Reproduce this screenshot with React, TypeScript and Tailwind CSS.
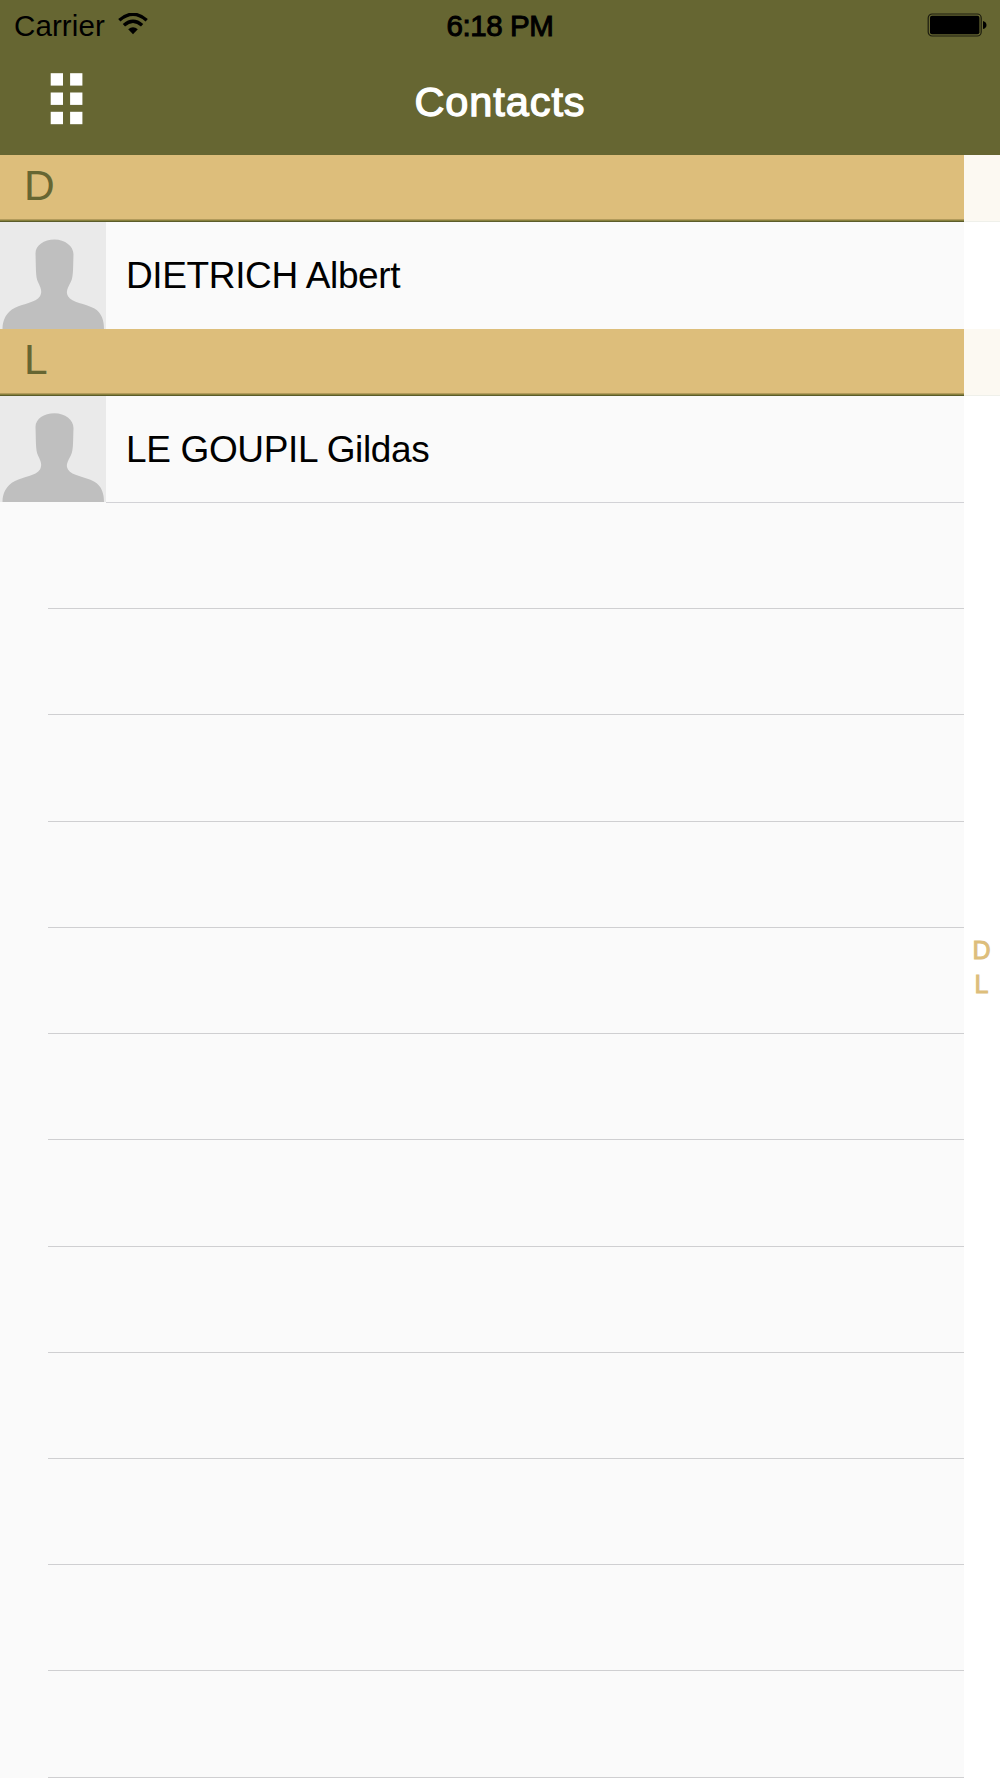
import React from "react";

function Avatar() {
  return (
    <svg viewBox="0 0 106 106" preserveAspectRatio="none" className="h-full w-[106px] shrink-0 bg-[#eaeaea]">
      <path
        d="M2.500 106C2.500 97.500 6 89.500 15 85C24 80.500 35.500 80 40 73.500C42.500 68.500 40.800 65.500 38 59.500C35.500 54.500 36 44 35.500 31C35.500 23 44 17.300 54.500 17.300C65 17.300 73.500 24 73.500 32C73 45 73.500 54 71 59C67.500 66 65.500 69 68 73.500C72 80 85 80.500 94 85.500C102 90 104 98 104 106Z"
        fill="#bfbfbf"
      />
    </svg>
  );
}

function Section({ letter }: { letter: string }) {
  return (
    <div className="flex h-[67px] w-[1000px] shrink-0">
      <div className="flex w-[964px] flex-col bg-[#ddbe7b]">
        <div className="h-[64px] pl-[24px] text-[42.500px] leading-[62px] text-[#666632]">{letter}</div>
        <div className="h-px bg-[#b19a5b]" />
        <div className="h-px bg-[#87803c]" />
        <div className="h-px bg-[#5b5c2a]" />
      </div>
      <div className="flex-1 border-b border-[#eff0ea] bg-[#fcf9f2]" />
    </div>
  );
}

function Contact({ name, height }: { name: string; height: string }) {
  return (
    <div className={"flex w-[964px] shrink-0 items-center " + height}>
      <Avatar />
      <span className="pl-[20px] pt-[1px] text-[37px] leading-[106px] tracking-[-0.36px] text-black">{name}</span>
    </div>
  );
}

const emptyRows = Array.from({ length: 12 }, (_, i) => i);

export default function App() {
  return (
    <div className="h-[1778px] w-[1000px] overflow-hidden bg-white font-['Liberation_Sans',Arial,sans-serif]">
      <header className="h-[155px] bg-[#666632]">
        <div className="grid h-[50px] grid-cols-3 items-center">
          <div className="flex items-center pl-[14px]">
            <span className="w-[92px] pt-[1px] text-[29.500px] leading-[50px] tracking-[0.1px] text-black">Carrier</span>
            <svg viewBox="0 0 30 22" className="mb-[3px] ml-[12px] h-[22px] w-[30px]">
              <path d="M1.300 7.300Q15-4.800 28.700 7.300" fill="none" stroke="#000" strokeWidth="3.400" />
              <path d="M5.900 12.300Q15 4.300 24.100 12.300" fill="none" stroke="#000" strokeWidth="3.400" />
              <path d="M10.200 16.200Q15 12.400 19.800 16.200L15 21.300Z" fill="#000" />
            </svg>
          </div>
          <span className="pt-[1px] text-center text-[29.500px] leading-[50px] tracking-[-0.4px] text-black [-webkit-text-stroke:1px_#000]">6:18 PM</span>
          <div className="flex justify-end pb-[1px] pr-[13px]">
            <svg viewBox="0 0 60 24" className="h-[24px] w-[60px]">
              <rect x="1.200" y="1" width="53" height="22" rx="4" fill="none" stroke="#1c1c0e" strokeWidth="1.200" />
              <rect x="3" y="2.800" width="49.400" height="18.400" rx="2" fill="#000" />
              <path d="M56 8Q59.500 9 59.500 12Q59.500 15 56 16Z" fill="#000" />
            </svg>
          </div>
        </div>
        <div className="grid h-[105px] grid-cols-3">
          <div className="pl-[50px] pt-[23px]">
            <svg viewBox="0 0 34 52" className="h-[52px] w-[34px]" fill="#fff">
              {[0.2, 19.5, 38.8].map((y) => (
                <g key={y}>
                  <rect x="0.700" y={y} width="12.300" height="12.400" />
                  <rect x="20.100" y={y} width="12.300" height="12.400" />
                </g>
              ))}
            </svg>
          </div>
          <h1 className="text-center text-[41.500px] leading-[104px] tracking-[0.9px] text-white [-webkit-text-stroke:1.3px_#fff]">Contacts</h1>
        </div>
      </header>
      <main className="relative h-[1623px]">
        <div className="flex h-full w-[964px] flex-col bg-[#fafafa]">
          <Section letter="D" />
          <Contact name="DIETRICH Albert" height="h-[107px]" />
          <Section letter="L" />
          <Contact name="LE GOUPIL Gildas" height="h-[106px]" />
          <div className="ml-[106px] h-px shrink-0 bg-[#d2d2d6]" />
          {emptyRows.map((i) => (
            <div key={i} className="ml-[48px] h-[106.230px] shrink-0 border-b border-[#cfcfd1]" />
          ))}
        </div>
        <nav className="absolute right-px top-[778px] flex w-[35px] flex-col items-center text-[25px] leading-[34px] text-[#ddbe7b] [-webkit-text-stroke:1px_#ddbe7b]">
          <span>D</span>
          <span>L</span>
        </nav>
      </main>
    </div>
  );
}
